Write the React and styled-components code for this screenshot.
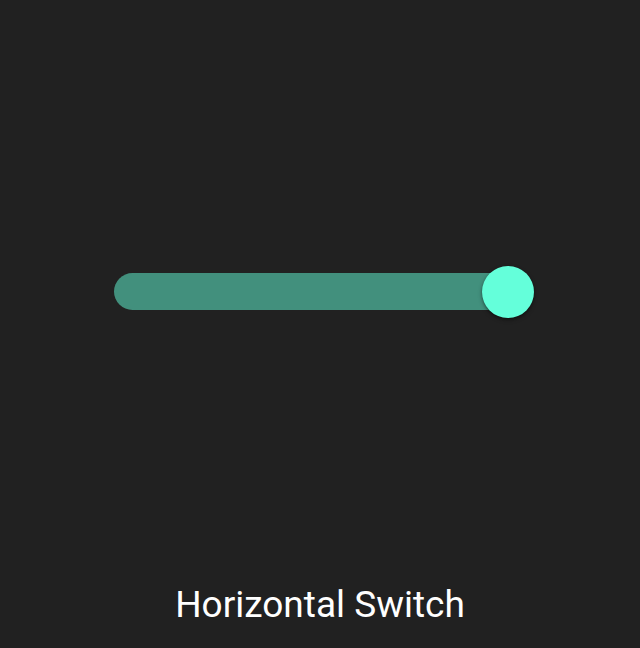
import React from 'react';
import styled, { createGlobalStyle } from 'styled-components';

const GlobalStyle = createGlobalStyle`
  html, body {
    margin: 0;
    padding: 0;
    background: #212121;
  }
  body {
    font-family: Roboto, "Liberation Sans", sans-serif;
  }
`;

const Page = styled.div`
  height: 648px;
  display: flex;
  flex-direction: column;
  background: #212121;
`;

const Stage = styled.div`
  flex: 1;
  display: flex;
  align-items: center;
  justify-content: center;
`;

const Track = styled.div`
  position: relative;
  width: 412px;
  height: 37px;
  border-radius: 18.5px;
  background: ${({ $on }) => ($on ? 'rgba(100, 255, 218, 0.5)' : 'rgba(255, 255, 255, 0.3)')};
  cursor: pointer;
`;

const Thumb = styled.div`
  position: absolute;
  top: 50%;
  left: ${({ $on }) => ($on ? 'calc(100% - 18.5px)' : '18.5px')};
  width: 52px;
  height: 52px;
  margin: -26px 0 0 -26px;
  border-radius: 50%;
  background: ${({ $on }) => ($on ? '#64ffda' : '#fafafa')};
  box-shadow: 0 2px 4px rgba(0, 0, 0, 0.35), 0 1px 2px rgba(0, 0, 0, 0.25);
  transition: left 0.2s ease;
`;

const Label = styled.div`
  height: 43px;
  margin-bottom: 22px;
  text-align: center;
  color: #ffffff;
  font-size: 37px;
  line-height: 43px;
`;

export default function App() {
  const [on, setOn] = React.useState(true);

  return (
    <Page>
      <GlobalStyle />
      <Stage>
        <Track $on={on} onClick={() => setOn(!on)}>
          <Thumb $on={on} />
        </Track>
      </Stage>
      <Label>Horizontal Switch</Label>
    </Page>
  );
}
